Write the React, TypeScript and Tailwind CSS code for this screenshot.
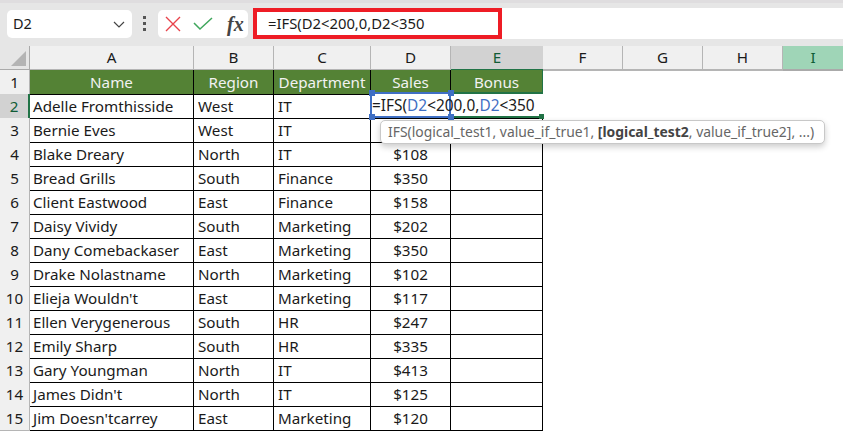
const rows = [
  ['Adelle Fromthisside', 'West', 'IT', ''],
  ['Bernie Eves', 'West', 'IT', ''],
  ['Blake Dreary', 'North', 'IT', '$108'],
  ['Bread Grills', 'South', 'Finance', '$350'],
  ['Client Eastwood', 'East', 'Finance', '$158'],
  ['Daisy Vividy', 'South', 'Marketing', '$202'],
  ['Dany Comebackaser', 'East', 'Marketing', '$350'],
  ['Drake Nolastname', 'North', 'Marketing', '$102'],
  ["Elieja Wouldn't", 'East', 'Marketing', '$117'],
  ['Ellen Verygenerous', 'South', 'HR', '$247'],
  ['Emily Sharp', 'South', 'HR', '$335'],
  ['Gary Youngman', 'North', 'IT', '$413'],
  ["James Didn't", 'North', 'IT', '$125'],
  ["Jim Doesn'tcarrey", 'East', 'Marketing', '$120'],
];

const letters = ['A', 'B', 'C', 'D', 'E', 'F', 'G', 'H', 'I'];
const titles = ['Name', 'Region', 'Department', 'Sales', 'Bonus'];
const gridCols = 'grid grid-cols-[30px_164px_80px_97px_80px_92px_80px_80px_80px_60px]';

const App = () => {
  return (
    <div className="w-[843px] h-[431px] overflow-hidden bg-white text-[15.2px] text-[#1a1a1a] font-['Noto_Sans','Open_Sans',sans-serif]">
      {/* 상단 수식 입력줄 */}
      <div className="flex h-[46px] items-center bg-[#e6e6e6] pl-[7px] pb-[2px] border-t-[3px] border-[#dfdddf]">
        <div className="flex h-[28px] w-[125px] items-center justify-between rounded-[5px] bg-white pl-[6px] pr-[6px]">
          <span className="text-[14.5px]">D2</span>
          <svg width="14" height="14" viewBox="0 0 14 14" fill="none" stroke="#444" strokeWidth="1.2">
            <path d="M2 5l5 5 5-5" />
          </svg>
        </div>
        <div className="mx-[10px] flex w-[5px] flex-col items-center gap-[3px] pr-[1px]">
          <span className="h-[3px] w-[3px] bg-[#555]" />
          <span className="h-[3px] w-[3px] bg-[#555]" />
          <span className="h-[3px] w-[3px] bg-[#555]" />
        </div>
        <div className="ml-[1px] flex h-[28px] w-[90px] items-center rounded-[5px] bg-white pl-[7px]">
          <svg width="16" height="16" viewBox="0 0 16 16" fill="none" stroke="#e8434b" strokeWidth="1.4">
            <path d="M1 1l14 14M15 1L1 15" />
          </svg>
          <svg className="ml-[12px]" width="20" height="14" viewBox="0 0 20 14" fill="none" stroke="#3fa65c" strokeWidth="1.5">
            <path d="M1 6l6 6L19 1" />
          </svg>
          <span className="ml-[14px] font-['Liberation_Serif',serif] text-[20px] italic font-bold leading-none text-[#444]">fx</span>
        </div>
        <div className="ml-[5px] flex h-[31px] flex-1 bg-white">
          <div className="flex h-[31px] w-[249px] items-center border-[4px] border-[#ee1c25] pl-[11px] text-[14.8px]">
            =IFS(D2&lt;200,0,D2&lt;350
          </div>
        </div>
      </div>

      {/* 시트 영역 */}
      <div className="relative">
        {/* 열 머리글 */}
        <div className={`${gridCols} h-[24px]`}>
          <div className="flex items-end justify-end border-r border-b-2 border-[#aaa] bg-[#e6e6e6] p-[3px]">
            <div className="h-0 w-0 border-b-[15px] border-l-[15px] border-b-[#b4b4b4] border-l-transparent" />
          </div>
          {letters.map((l) => (
            <div
              key={l}
              className={
                l === 'E'
                  ? 'flex items-center justify-center border-b-2 border-[#217346] bg-[#d2d2d2] text-[#105c36]'
                  : l === 'I'
                    ? 'flex items-center justify-center border-b-2 border-[#aaa] bg-[#9fd5b7] text-[#105c36]'
                    : 'flex items-center justify-center border-r border-b-2 border-[#b5b5b5] bg-[#f0f0f0]'
              }
            >
              {l}
            </div>
          ))}
          <div className="border-b-2 border-[#aaa] bg-[#9fd5b7]" />
        </div>

        {/* 제목 행 */}
        <div className={`${gridCols} h-[24px]`}>
          <div className="flex items-center justify-center border-r border-b border-[#b5b5b5] bg-[#f0f0f0] pt-px">1</div>
          {titles.map((t) => (
            <div key={t} className="flex items-center justify-center border-r border-b border-black bg-[#548235] pt-px text-[#f2f2f2] last:border-r-[#217346]">
              {t}
            </div>
          ))}
        </div>

        {/* 데이터 행 */}
        {rows.map((r, i) => (
          <div key={r[0]} className={`${gridCols} h-[24px]`}>
            <div
              className={
                i === 0
                  ? 'flex items-center justify-center border-r-2 border-b border-r-[#217346] border-b-[#b5b5b5] bg-[#d2d2d2] pt-px text-[#105c36]'
                  : 'flex items-center justify-center border-r border-b border-[#b5b5b5] bg-[#f0f0f0] pt-px'
              }
            >
              {i + 2}
            </div>
            <div className="flex items-center overflow-hidden border-r border-b border-black pl-[3px] pt-px whitespace-nowrap">{r[0]}</div>
            <div className="flex items-center border-r border-b border-black pl-[4px] pt-px">{r[1]}</div>
            <div className="flex items-center border-r border-b border-black pl-[4px] pt-px">{r[2]}</div>
            <div className="flex items-center justify-center border-r border-b border-black pt-px">{r[3]}</div>
            <div className="border-r border-b border-black" />
          </div>
        ))}

        {/* 편집 중인 셀 */}
        <div className="absolute left-[371px] top-[46px] flex h-[26px] w-[172px] items-center whitespace-nowrap border-y-2 border-[#217346] bg-white pt-[2px] text-[15.4px]">
          <div className="absolute -left-px -top-[2px] h-[26px] w-[81px] border-2 border-[#3f6fc4]" />
          <span className="absolute -left-[2px] -top-[4px] h-[6px] w-[6px] bg-[#3f6fc4]" />
          <span className="absolute left-[77px] -top-[4px] h-[6px] w-[6px] bg-[#3f6fc4]" />
          <span className="absolute -left-[2px] top-[20px] h-[6px] w-[6px] bg-[#3f6fc4]" />
          <span className="absolute left-[77px] top-[20px] h-[6px] w-[6px] bg-[#3f6fc4]" />
          <span className="absolute left-[168px] top-[20px] h-[5px] w-[5px] bg-[#217346]" />
          <span className="relative pl-[1px]">
            =IFS(<span className="text-[#3f6fc4]">D2</span>&lt;200,0,<span className="text-[#3f6fc4]">D2</span>&lt;350
          </span>
        </div>

        {/* 함수 도움말 */}
        <div className="absolute left-[380px] top-[74px] flex h-[24px] w-[445px] items-center whitespace-nowrap rounded-[5px] border border-[#c8c8c8] bg-white pl-[7px] text-[13.9px] text-[#666] shadow-[0_3px_6px_rgba(0,0,0,0.2)]">
          IFS(logical_test1, value_if_true1,&nbsp;<b className="text-[#444]">[logical_test2</b>, value_if_true2], ...)
        </div>
      </div>
    </div>
  );
};

export default App;
